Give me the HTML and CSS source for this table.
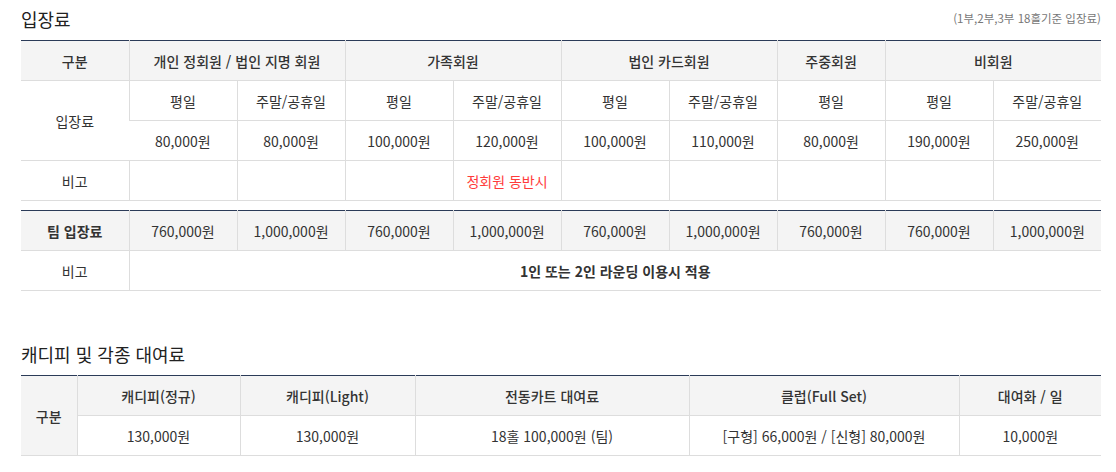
FILE: index.html
```html
<!DOCTYPE html>
<html lang="ko">
<head>
<meta charset="utf-8">
<link rel="stylesheet" href="styles.css">
</head>
<body>
<div class="page">
  <section class="sec">
    <div class="sec-head">
      <h2 class="sec-title">입장료</h2>
      <span class="sec-note">(1부,2부,3부 18홀기준 입장료)</span>
    </div>
    <table class="tbl tbl-fee">
      <colgroup>
        <col class="c108"><col class="c108"><col class="c108"><col class="c108"><col class="c108">
        <col class="c108"><col class="c108"><col class="c108"><col class="c108"><col class="c108">
      </colgroup>
      <tr class="head">
        <th>구분</th>
        <th colspan="2">개인 정회원 / 법인 지명 회원</th>
        <th colspan="2">가족회원</th>
        <th colspan="2">법인 카드회원</th>
        <th>주중회원</th>
        <th colspan="2">비회원</th>
      </tr>
      <tr>
        <td rowspan="2">입장료</td>
        <td>평일</td><td>주말/공휴일</td>
        <td>평일</td><td>주말/공휴일</td>
        <td>평일</td><td>주말/공휴일</td>
        <td>평일</td>
        <td>평일</td><td>주말/공휴일</td>
      </tr>
      <tr>
        <td>80,000원</td><td>80,000원</td>
        <td>100,000원</td><td>120,000원</td>
        <td>100,000원</td><td>110,000원</td>
        <td>80,000원</td>
        <td>190,000원</td><td>250,000원</td>
      </tr>
      <tr>
        <td>비고</td>
        <td></td><td></td><td></td><td class="red">정회원 동반시</td>
        <td></td><td></td><td></td><td></td><td></td>
      </tr>
    </table>
    <table class="tbl tbl-team">
      <colgroup>
        <col class="c108"><col class="c108"><col class="c108"><col class="c108"><col class="c108">
        <col class="c108"><col class="c108"><col class="c108"><col class="c108"><col class="c108">
      </colgroup>
      <tr class="head">
        <th class="bold">팀 입장료</th>
        <td>760,000원</td><td>1,000,000원</td>
        <td>760,000원</td><td>1,000,000원</td>
        <td>760,000원</td><td>1,000,000원</td>
        <td>760,000원</td>
        <td>760,000원</td><td>1,000,000원</td>
      </tr>
      <tr>
        <td>비고</td>
        <td colspan="9" class="bold">1인 또는 2인 라운딩 이용시 적용</td>
      </tr>
    </table>
  </section>

  <section class="sec sec2">
    <div class="sec-head">
      <h2 class="sec-title">캐디피 및 각종 대여료</h2>
    </div>
    <table class="tbl tbl-rent">
      <colgroup>
        <col class="r1"><col class="r2"><col class="r3"><col class="r4"><col class="r5"><col class="r6">
      </colgroup>
      <tr class="head">
        <th rowspan="2" class="gray">구분</th>
        <th>캐디피(정규)</th>
        <th>캐디피(Light)</th>
        <th>전동카트 대여료</th>
        <th>클럽(Full Set)</th>
        <th>대여화 / 일</th>
      </tr>
      <tr>
        <td>130,000원</td>
        <td>130,000원</td>
        <td>18홀 100,000원 (팀)</td>
        <td>[구형] 66,000원 / [신형] 80,000원</td>
        <td>10,000원</td>
      </tr>
    </table>
  </section>
</div>
</body>
</html>
```

FILE: styles.css
```css
html, body {
  margin: 0;
  padding: 0;
  background: #fff;
}
body {
  font-family: "Noto Sans CJK KR", "Noto Sans", sans-serif;
  color: #333;
}
.page {
  width: 1080px;
  padding: 0 15px 0 21px;
}
.sec-head {
  display: flex;
  justify-content: space-between;
  align-items: flex-end;
  height: 40px;
}
.sec-title {
  margin: 0;
  font-size: 18px;
  font-weight: 400;
  color: #222;
  line-height: 26px;
  padding-bottom: 8px;
}
.sec-note {
  font-size: 11.5px;
  color: #777;
  line-height: 14px;
  padding-bottom: 15px;
}
.sec2 {
  margin-top: 44px;
}
.tbl {
  width: 1080px;
  border-collapse: collapse;
  table-layout: fixed;
  border-top: 1px solid #2b3b58;
}
.c108 { width: 108px; }
.r1 { width: 56px; }
.r2 { width: 163px; }
.r3 { width: 175px; }
.r4 { width: 274px; }
.r5 { width: 270px; }
.r6 { width: 142px; }
.tbl th, .tbl td {
  height: 39px;
  padding: 0;
  text-align: center;
  vertical-align: middle;
  font-size: 14px;
  line-height: 18px;
  border-bottom: 1px solid #ddd;
  border-left: 1px solid #ddd;
  color: #333;
}
.tbl th:first-child, .tbl td:first-child {
  border-left: none;
}
.tbl th {
  font-weight: 500;
  color: #333;
}
.tbl .head th, .tbl .head td, .tbl .gray {
  background: #f4f4f4;
}
.tbl-team {
  margin-top: 9px;
}
.tbl .bold {
  font-weight: 700;
  color: #333;
}
.tbl .red {
  color: #ff3b3b;
}
.tbl-rent td:first-child {
  border-left: 1px solid #ddd;
}
```
